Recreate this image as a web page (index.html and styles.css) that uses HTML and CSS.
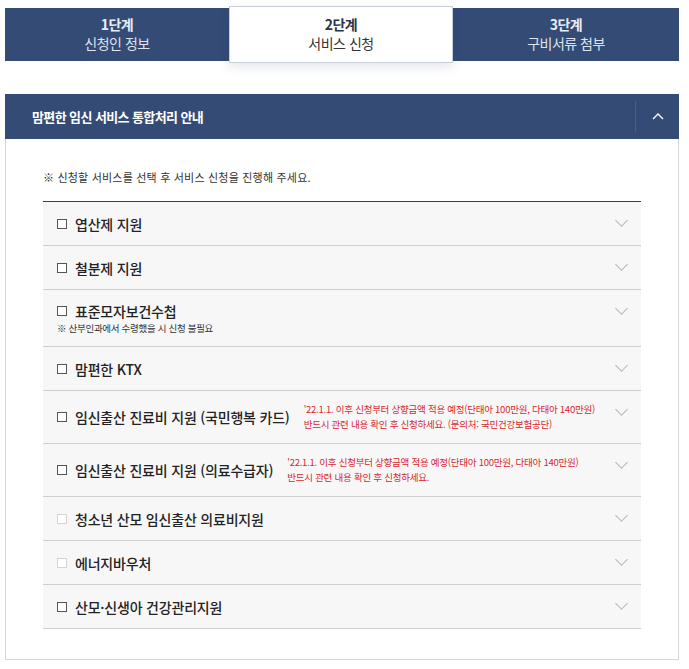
FILE: index.html
```html
<!DOCTYPE html>
<html lang="ko">
<head>
    <meta charset="UTF-8">
    <meta name="viewport" content="width=device-width, initial-scale=1.0">
    <title>서비스 신청</title>
    <link rel="stylesheet" href="styles.css">
</head>

<body>

    <!-- Step Navigation -->
    <div class="steps">
        <div class="step">
            <strong>1단계</strong>
            <span>신청인 정보</span>
        </div>
        <div class="step active">
            <strong>2단계</strong>
            <span>서비스 신청</span>
        </div>
        <div class="step">
            <strong>3단계</strong>
            <span>구비서류 첨부</span>
        </div>
    </div>

    <!-- Service Panel -->
    <div class="panel">
        <div class="panel-head">
            <h2>맘편한 임신 서비스 통합처리 안내</h2>
            <button class="toggle" type="button">
                <svg width="12" height="8" viewBox="0 0 12 8"><path d="M1 7 L6 2 L11 7" fill="none" stroke="#fff" stroke-width="1.4"/></svg>
            </button>
        </div>

        <div class="panel-body">
            <p class="notice">※ 신청할 서비스를 선택 후 서비스 신청을 진행해 주세요.</p>

            <ul class="services">
                <li class="service">
                    <div class="info"><label class="name"><span class="check"></span>엽산제 지원</label></div>
                    <span class="arrow"></span>
                </li>
                <li class="service">
                    <div class="info"><label class="name"><span class="check"></span>철분제 지원</label></div>
                    <span class="arrow"></span>
                </li>
                <li class="service">
                    <div class="info stacked">
                        <label class="name"><span class="check"></span>표준모자보건수첩</label>
                        <span class="sub">※ 산부인과에서 수령했을 시 신청 불필요</span>
                    </div>
                    <span class="arrow"></span>
                </li>
                <li class="service">
                    <div class="info"><label class="name"><span class="check"></span>맘편한 KTX</label></div>
                    <span class="arrow"></span>
                </li>
                <li class="service">
                    <div class="info">
                        <label class="name"><span class="check"></span>임신출산 진료비 지원 (국민행복 카드)</label>
                        <span class="warn">'22.1.1. 이후 신청부터 상향금액 적용 예정(단태아 100만원, 다태아 140만원)<br>반드시 관련 내용 확인 후 신청하세요. (문의처: 국민건강보험공단)</span>
                    </div>
                    <span class="arrow"></span>
                </li>
                <li class="service">
                    <div class="info">
                        <label class="name"><span class="check"></span>임신출산 진료비 지원 (의료수급자)</label>
                        <span class="warn">'22.1.1. 이후 신청부터 상향금액 적용 예정(단태아 100만원, 다태아 140만원)<br>반드시 관련 내용 확인 후 신청하세요.</span>
                    </div>
                    <span class="arrow"></span>
                </li>
                <li class="service">
                    <div class="info"><label class="name"><span class="check disabled"></span>청소년 산모 임신출산 의료비지원</label></div>
                    <span class="arrow"></span>
                </li>
                <li class="service">
                    <div class="info"><label class="name"><span class="check disabled"></span>에너지바우처</label></div>
                    <span class="arrow"></span>
                </li>
                <li class="service">
                    <div class="info"><label class="name"><span class="check"></span>산모·신생아 건강관리지원</label></div>
                    <span class="arrow"></span>
                </li>
            </ul>
        </div>
    </div>

</body>
</html>
```

FILE: styles.css
```css
body {
    font-family: "Noto Sans CJK KR", "Noto Sans", sans-serif;
    margin: 0;
    padding: 8px 10px 0 5px;
    background-color: #fff;
    color: #222;
}

/* Step Navigation */
.steps {
    display: grid;
    grid-template-columns: 224px 224px 1fr;
    height: 53px;
    background-color: #344b76;
}

.step {
    display: flex;
    flex-direction: column;
    align-items: center;
    justify-content: center;
    color: #dfe4ee;
    font-size: 14px;
    line-height: 19px;
    letter-spacing: -0.5px;
    padding-bottom: 2px;
}

.step strong {
    font-weight: 700;
    color: #e8ecf3;
}

.step.active {
    background-color: #fff;
    color: #333;
    border: 1px solid #c9cfda;
    margin: -2px 0;
    box-shadow: 0 4px 10px rgba(40, 60, 110, 0.12);
}

.step.active strong {
    color: #2b3550;
}

/* Panel */
.panel {
    margin-top: 33px;
}

.panel-head {
    display: flex;
    align-items: center;
    height: 45px;
    background-color: #344b76;
    padding-left: 27px;
}

.panel-head h2 {
    flex: 1;
    margin: 0;
    color: #fff;
    font-size: 13px;
    font-weight: 700;
    letter-spacing: -0.6px;
}

.toggle {
    width: 44px;
    height: 31px;
    border: none;
    border-left: 1px solid #4a5f86;
    background: none;
    padding: 0 0 2px 0;
    display: flex;
    align-items: center;
    justify-content: center;
}

.panel-body {
    border: 1px solid #d6d6d6;
    border-top: none;
    padding: 30px 37px 30px 37px;
}

.notice {
    margin: 0 0 16px 0;
    font-size: 11px;
    line-height: 16px;
    color: #333;
    letter-spacing: 0.2px;
}

/* Service list */
.services {
    list-style: none;
    margin: 0;
    padding: 0;
    border-top: 1px solid #3b4148;
}

.service {
    display: flex;
    align-items: center;
    padding: 11px 15px 11px 14px;
    min-height: 21px;
    background-color: #f7f7f7;
    border-bottom: 1px solid #cfcfcf;
}

.info {
    display: flex;
    align-items: center;
    gap: 14px;
    flex: 1;
}

.info.stacked {
    flex-direction: column;
    align-items: flex-start;
    gap: 0;
}

.name {
    display: flex;
    align-items: center;
    font-size: 14px;
    font-weight: 500;
    line-height: 20px;
    color: #222;
    letter-spacing: -0.2px;
    white-space: nowrap;
}

.check {
    width: 8px;
    height: 8px;
    border: 1px solid #555;
    background-color: #fff;
    margin-right: 8px;
    flex-shrink: 0;
}

.check.disabled {
    border-color: #d4d4d4;
}

.sub {
    font-size: 9.5px;
    line-height: 13px;
    color: #333;
    margin-top: 1px;
    letter-spacing: -0.3px;
}

.warn {
    font-size: 9.5px;
    line-height: 15px;
    color: #d9272e;
    letter-spacing: -0.25px;
}

.arrow {
    width: 8px;
    height: 8px;
    border-right: 1px solid #b3b3b3;
    border-bottom: 1px solid #b3b3b3;
    transform: rotate(45deg);
    align-self: flex-start;
    margin-top: 3px;
    margin-left: 10px;
    flex-shrink: 0;
}
```
